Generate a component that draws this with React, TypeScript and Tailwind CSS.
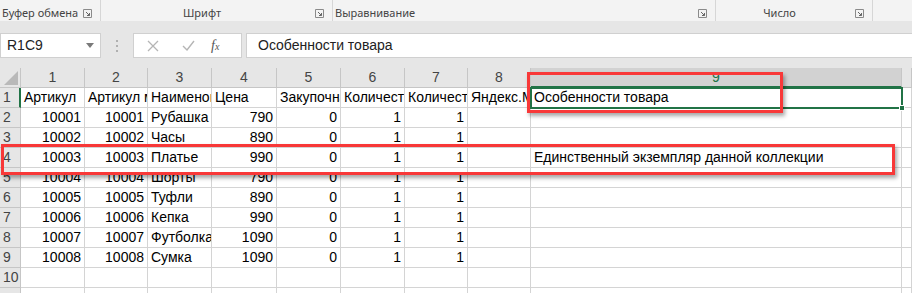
const CELL_FONT = "font-['Liberation_Sans',Arial,sans-serif]";

const colWidths = [64, 63, 64, 65, 64, 64, 63, 63, 371, 10];

type Cell = string | number | null;

const rows: Cell[][] = [
  ["Артикул", "Артикул маркетплейса", "Наименование", "Цена", "Закупочная цена", "Количество", "Количество", "Яндекс.Маркет", "Особенности товара"],
  [10001, 10001, "Рубашка", 790, 0, 1, 1, null, null],
  [10002, 10002, "Часы", 890, 0, 1, 1, null, null],
  [10003, 10003, "Платье", 990, 0, 1, 1, null, "Единственный экземпляр данной коллекции"],
  [10004, 10004, "Шорты", 790, 0, 1, 1, null, null],
  [10005, 10005, "Туфли", 890, 0, 1, 1, null, null],
  [10006, 10006, "Кепка", 990, 0, 1, 1, null, null],
  [10007, 10007, "Футболка", 1090, 0, 1, 1, null, null],
  [10008, 10008, "Сумка", 1090, 0, 1, 1, null, null],
  [null, null, null, null, null, null, null, null, null],
];

const groups = [
  { label: "Буфер обмена", width: 101, align: "left" },
  { label: "Шрифт", width: 232, align: "center" },
  { label: "Выравнивание", width: 383, align: "left" },
  { label: "Число", width: 157, align: "center" },
];

function Launcher() {
  return (
    <svg width="9" height="9" viewBox="0 0 9 9" className="shrink-0">
      <path d="M0.5 0.5h8v8h-8z" fill="none" stroke="#8a8a8a" />
      <path d="M3 3l3.5 3.5M6.5 4v2.5H4" fill="none" stroke="#666" />
    </svg>
  );
}

function Ribbon() {
  return (
    <div className="flex h-[21px] bg-[#f3f3f3] shadow-[0_1px_3px_rgba(0,0,0,0.18)] font-['Noto_Sans',sans-serif] text-[11px] text-[#444]">
      {groups.map((g) => (
        <div
          key={g.label}
          style={{ width: g.width }}
          className="flex h-full items-center whitespace-nowrap border-r border-[#d6d6d6] pl-[2px] pr-[8px] pt-[5px]"
        >
          <span className={g.align === "center" ? "flex-1 pr-[14px] text-center" : "flex-1"}>{g.label}</span>
          <Launcher />
        </div>
      ))}
    </div>
  );
}

function FormulaBar() {
  return (
    <div className="flex h-[47px] items-start bg-[#e6e6e6] pt-[12px]">
      <div className="flex h-[25px] w-[101px] items-center justify-between border border-[#d0d0d0] bg-white pl-[6px] pr-[6px]">
        <span className={`${CELL_FONT} text-[14px] text-[#222]`}>R1C9</span>
        <svg width="8" height="5" viewBox="0 0 8 5">
          <path d="M0 0h8L4 5z" fill="#7a7a7a" />
        </svg>
      </div>
      <div className="flex w-[32px] justify-center pt-[7px]">
        <div className="flex flex-col gap-[3px]">
          <span className="h-[2px] w-[2px] bg-[#b0b0b0]" />
          <span className="h-[2px] w-[2px] bg-[#b0b0b0]" />
          <span className="h-[2px] w-[2px] bg-[#b0b0b0]" />
        </div>
      </div>
      <div className="flex h-[25px] w-[109px] items-center border border-[#d0d0d0] bg-white">
        <svg width="12" height="12" viewBox="0 0 12 12" className="ml-[13px]">
          <path d="M1 1l10 10M11 1L1 11" stroke="#b5b5b5" strokeWidth="1.3" />
        </svg>
        <svg width="13" height="11" viewBox="0 0 13 11" className="ml-[23px]">
          <path d="M1 6l4 4 7-9" fill="none" stroke="#b5b5b5" strokeWidth="1.4" />
        </svg>
        <span className="ml-[16px] font-['Liberation_Serif',serif] text-[14px] italic text-[#555]">
          f<span className="text-[10px]">x</span>
        </span>
      </div>
      <div className="ml-[4px] flex h-[25px] flex-1 items-center border border-r-0 border-[#d0d0d0] bg-white pl-[11px]">
        <span className={`${CELL_FONT} text-[14px] text-[#222]`}>Особенности товара</span>
      </div>
    </div>
  );
}

function Sheet() {
  return (
    <div className={`relative ${CELL_FONT} text-[14px] text-black`}>
      {/* column headers */}
      <div className="flex h-[20px] bg-[#e6e6e6]">
        <div className="relative w-[21px] shrink-0 border-r border-b border-[#c6c6c6]">
          <svg width="14" height="14" viewBox="0 0 14 14" className="absolute bottom-[2px] right-[2px]">
            <path d="M14 0v14H0z" fill="#b9b9b9" />
          </svg>
        </div>
        {colWidths.map((w, i) => (
          <div
            key={i}
            style={{ width: w }}
            className={
              i === 8
                ? "flex shrink-0 items-center justify-center border-r border-b-2 border-r-[#c6c6c6] border-b-[#217346] bg-[#d2d2d2] text-[#217346]"
                : "flex shrink-0 items-center justify-center border-r border-b border-[#c6c6c6] text-[#444]"
            }
          >
            {i < 9 ? i + 1 : ""}
          </div>
        ))}
      </div>
      {rows.map((row, r) => (
        <div key={r} className="flex h-[20px]">
          <div
            className={
              r === 0
                ? "flex w-[21px] shrink-0 items-center border-r-2 border-b border-r-[#217346] border-b-[#c6c6c6] bg-[#e6e6e6] pl-[3px] text-[#444]"
                : "flex w-[21px] shrink-0 items-center border-r border-b border-[#c6c6c6] bg-[#e6e6e6] pl-[3px] text-[#444]"
            }
          >
            {r + 1}
          </div>
          {colWidths.map((w, c) => {
            const v = c < 9 ? row[c] : null;
            const isNum = typeof v === "number";
            return (
              <div
                key={c}
                style={{ width: w }}
                className={
                  isNum
                    ? "flex shrink-0 items-center justify-end overflow-hidden whitespace-nowrap border-r border-b border-[#d4d4d4] bg-white pr-[3px]"
                    : "flex shrink-0 items-center overflow-hidden whitespace-nowrap border-r border-b border-[#d4d4d4] bg-white pl-[3px]"
                }
              >
                {v}
              </div>
            );
          })}
        </div>
      ))}
      <div className="flex h-[10px]">
        <div className="w-[21px] shrink-0 border-r border-[#c6c6c6] bg-[#e6e6e6]" />
        {colWidths.map((w, c) => (
          <div key={c} style={{ width: w }} className="shrink-0 border-r border-[#d4d4d4] bg-white" />
        ))}
      </div>

      {/* active cell */}
      <div className="pointer-events-none absolute left-[530px] top-[19px] h-[22px] w-[373px] border-2 border-[#217346]">
        <span className="absolute -bottom-[4px] -right-[4px] h-[6px] w-[6px] border border-white bg-[#217346]" />
      </div>

      {/* red highlight frames */}
      <div className="pointer-events-none absolute left-[527px] top-[4px] h-[41px] w-[256px] border-[3px] border-[#f83838] shadow-[2px_3px_4px_rgba(0,0,0,0.35)]" />
      <div className="pointer-events-none absolute left-[1px] top-[76px] h-[31px] w-[894px] border-[3px] border-[#f83838] shadow-[2px_3px_4px_rgba(0,0,0,0.35)]" />
    </div>
  );
}

export default function App() {
  return (
    <div className="h-[293px] w-[912px] overflow-hidden bg-[#e6e6e6]">
      <Ribbon />
      <FormulaBar />
      <Sheet />
    </div>
  );
}
